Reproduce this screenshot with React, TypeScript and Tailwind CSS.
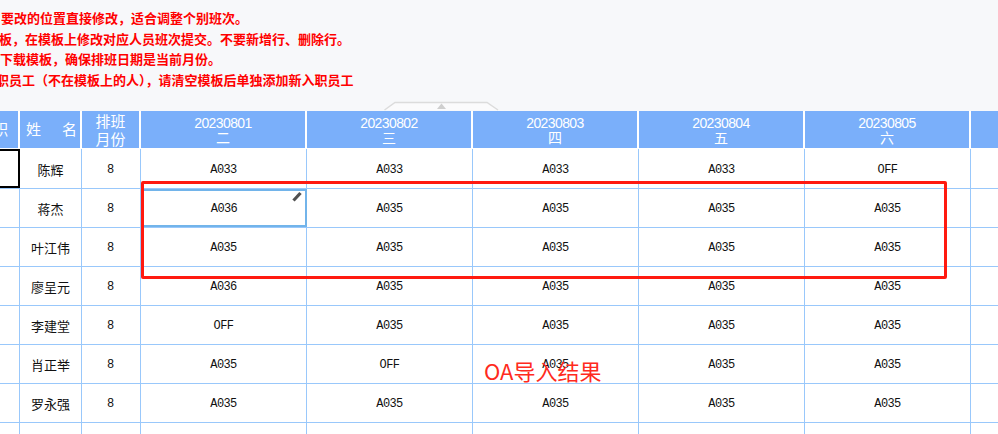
const notices = [
  { text: '要改的位置直接修改，适合调整个别班次。', className: 'ml-[1px]' },
  { text: '板，在模板上修改对应人员班次提交。不要新增行、删除行。', className: '-ml-[1px]' },
  { text: '下载模板，确保排班日期是当前月份。', className: 'ml-0' },
  { text: '职员工（不在模板上的人），请清空模板后单独添加新入职员工', className: '-ml-[4px]' },
];

const days = [
  { date: '20230801', week: '二' },
  { date: '20230802', week: '三' },
  { date: '20230803', week: '四' },
  { date: '20230804', week: '五' },
  { date: '20230805', week: '六' },
];

const rows = [
  { name: '陈辉', shifts: ['A033', 'A033', 'A033', 'A033', 'OFF'] },
  { name: '蒋杰', shifts: ['A036', 'A035', 'A035', 'A035', 'A035'] },
  { name: '叶江伟', shifts: ['A035', 'A035', 'A035', 'A035', 'A035'] },
  { name: '廖呈元', shifts: ['A036', 'A035', 'A035', 'A035', 'A035'] },
  { name: '李建堂', shifts: ['OFF', 'A035', 'A035', 'A035', 'A035'] },
  { name: '肖正举', shifts: ['A035', 'OFF', 'A035', 'A035', 'A035'] },
  { name: '罗永强', shifts: ['A035', 'A035', 'A035', 'A035', 'A035'] },
  { name: '', shifts: ['', '', '', '', ''] },
];

const gridCols = 'grid grid-cols-[20px_62px_59px_166px_166px_166px_166px_166px_1fr]';

export default function App() {
  return (
    <div className="relative h-[434px] w-[998px] overflow-hidden bg-white font-['Noto_Sans_CJK_SC','Noto_Sans',sans-serif]">
      {/* Notes above the table, cut off by the left edge */}
      <div className="relative flex h-[111px] flex-col overflow-hidden bg-[#f7f8fa] pt-[8px] text-[13px] leading-[20.5px] font-bold text-[#ff0000]">
        {notices.map((n) => (
          <p key={n.text} className={`whitespace-nowrap ${n.className}`}>
            {n.text}
          </p>
        ))}
      </div>

      {/* Collapse handle */}
      <svg className="absolute top-[101px] left-[384px]" width="115" height="10" viewBox="0 0 115 10">
        <path d="M0.500 9 L11 1.500 H103 L114 9" fill="#fbfbfc" stroke="#dcdcdc" strokeWidth="1.500" />
        <path d="M53 8 L57.500 2.500 L62 8 Z" fill="#cfcfcf" />
      </svg>

      <div className={`${gridCols} h-[38px] border-b border-white bg-[#7aaffa] text-white`}>
        <div className="flex items-center overflow-hidden border-r-2 border-white text-[15px] whitespace-nowrap">
          <span className="-ml-[7px]">职</span>
        </div>
        <div className="flex items-center justify-between border-r-2 border-white pr-[3px] pl-[6px] text-[15px]">
          <span>姓</span>
          <span>名</span>
        </div>
        <div className="flex items-center justify-center border-r-2 border-white text-center text-[15px] leading-[18px]">
          排班
          <br />
          月份
        </div>
        {days.map((d) => (
          <div key={d.date} className="flex flex-col items-center justify-center border-r-2 border-white pb-[3px]">
            <span className="font-['Liberation_Sans',sans-serif] text-[14px] leading-[18px] tracking-[-0.6px]">{d.date}</span>
            <span className="text-[14px] leading-[11px]">{d.week}</span>
          </div>
        ))}
        <div />
      </div>

      {rows.map((row, i) => (
        <div key={i} className={`${gridCols} ${i === 0 ? 'h-[40px]' : 'h-[39px]'} border-b border-[#99c8fb] text-[13px] text-[#111111]`}>
          <div className={`border-r border-[#99c8fb] ${i === 0 ? 'border-t-2 border-r-2 border-b-2 border-t-black border-r-black border-b-black' : ''}`} />
          <div className="flex items-center justify-center border-r border-[#99c8fb] pt-[2px]">{row.name}</div>
          <div className="flex items-center justify-center border-r border-[#99c8fb] pt-[2px] pr-[1px] font-['Liberation_Mono',monospace] text-[12px]">
            {row.name ? '8' : ''}
          </div>
          {row.shifts.map((s, j) => (
            <div
              key={j}
              className={`relative flex items-center justify-center pt-[2px] font-['Liberation_Mono',monospace] text-[12px] tracking-[-0.6px] ${
                i === 1 && j === 0 ? 'border-2 border-[#72b4ea]' : 'border-r border-[#99c8fb]'
              }`}
            >
              {s}
              {i === 1 && j === 0 && (
                <svg className="absolute top-[0px] right-[3px]" width="10" height="11" viewBox="0 0 10 11">
                  <path d="M1.500 9.500 L8.500 2" stroke="#505050" strokeWidth="3.200" />
                </svg>
              )}
            </div>
          ))}
          <div />
        </div>
      ))}

      {/* Red annotation drawn on top of the screenshot */}
      <div className="absolute top-[181px] left-[141px] h-[98px] w-[806px] rounded-[2px] border-[3px] border-[#ff1a10]" />
      <div className="absolute top-[355px] left-[484px] text-[22px] leading-[30px] text-[#ff2a20]">OA导入结果</div>
    </div>
  );
}
